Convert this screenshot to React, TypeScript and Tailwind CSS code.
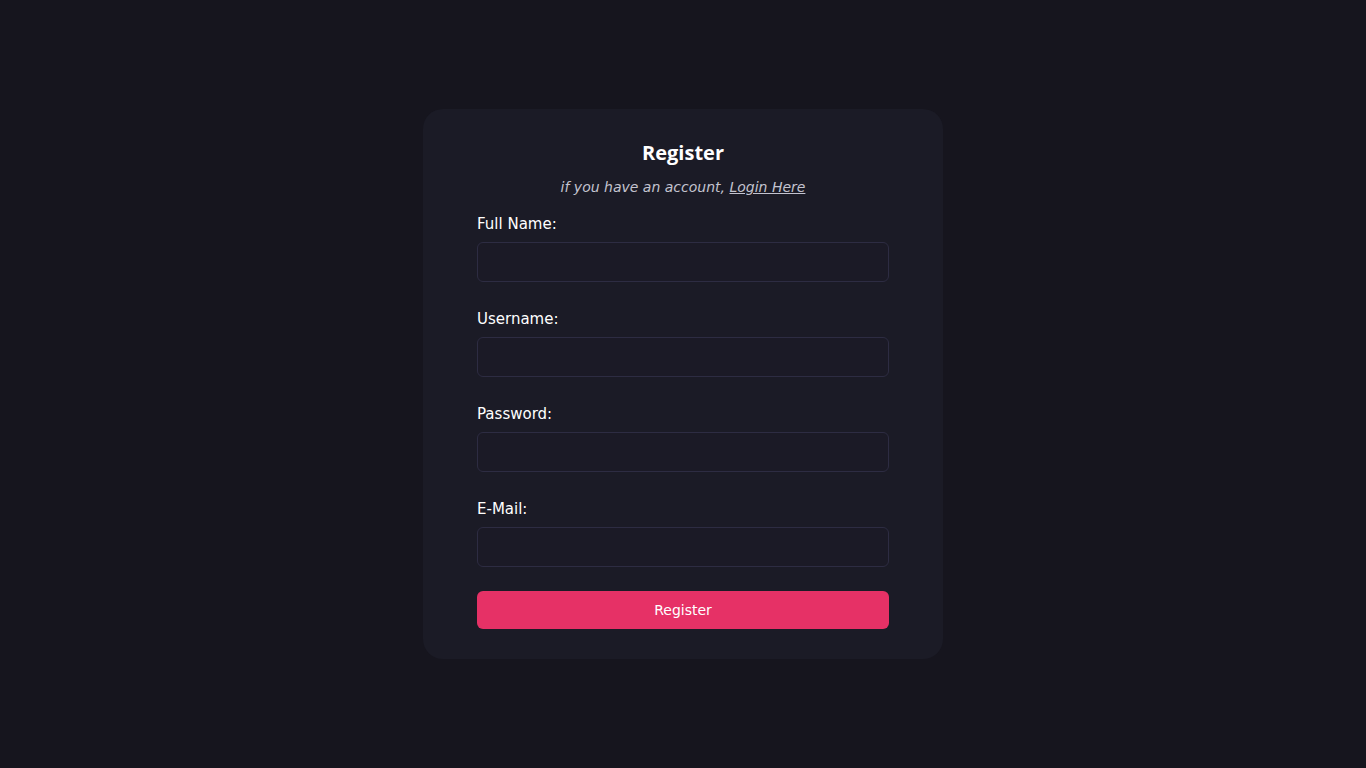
import { useState } from "react";

const fields = [
  { id: "fullname", label: "Full Name:", type: "text" },
  { id: "username", label: "Username:", type: "text" },
  { id: "password", label: "Password:", type: "password" },
  { id: "email", label: "E-Mail:", type: "email" },
];

export default function App() {
  const [values, setValues] = useState<Record<string, string>>({});

  return (
    <div
      className="flex min-h-screen items-start justify-center bg-[#16151e] pt-[109px]"
      style={{ fontFamily: "'DejaVu Sans', 'Noto Sans', sans-serif" }}
    >
      <form
        onSubmit={(e) => e.preventDefault()}
        className="flex w-[520px] flex-col rounded-[20px] bg-[#1b1b26] px-[54px] pt-[30px] pb-[30px]"
      >
        <h1 className="text-center font-['Open_Sans',sans-serif] text-[20px] leading-[28px] font-bold text-white">
          Register
        </h1>
        <p className="mt-[10px] text-center text-[14px] leading-[20px] text-[#c3c3cf] italic">
          if you have an account,{" "}
          <a href="#" className="underline">
            Login Here
          </a>
        </p>

        <div className="mt-[14px] flex flex-col gap-[24px]">
          {fields.map((f) => (
            <div key={f.id} className="flex flex-col">
              <label htmlFor={f.id} className="pt-px text-[15px] leading-[24px] text-white">
                {f.label}
              </label>
              <input
                id={f.id}
                type={f.type}
                value={values[f.id] || ""}
                onChange={(e) => setValues({ ...values, [f.id]: e.target.value })}
                className="mt-[6px] h-[40px] w-full rounded-[6px] border border-[#2d2c42] bg-[#1b1a26] px-3 text-sm text-white focus:outline-none"
              />
            </div>
          ))}
        </div>

        <button
          type="submit"
          className="mt-[24px] h-[38px] w-full rounded-[6px] bg-[#e63166] text-[14px] text-white"
        >
          Register
        </button>
      </form>
    </div>
  );
}
